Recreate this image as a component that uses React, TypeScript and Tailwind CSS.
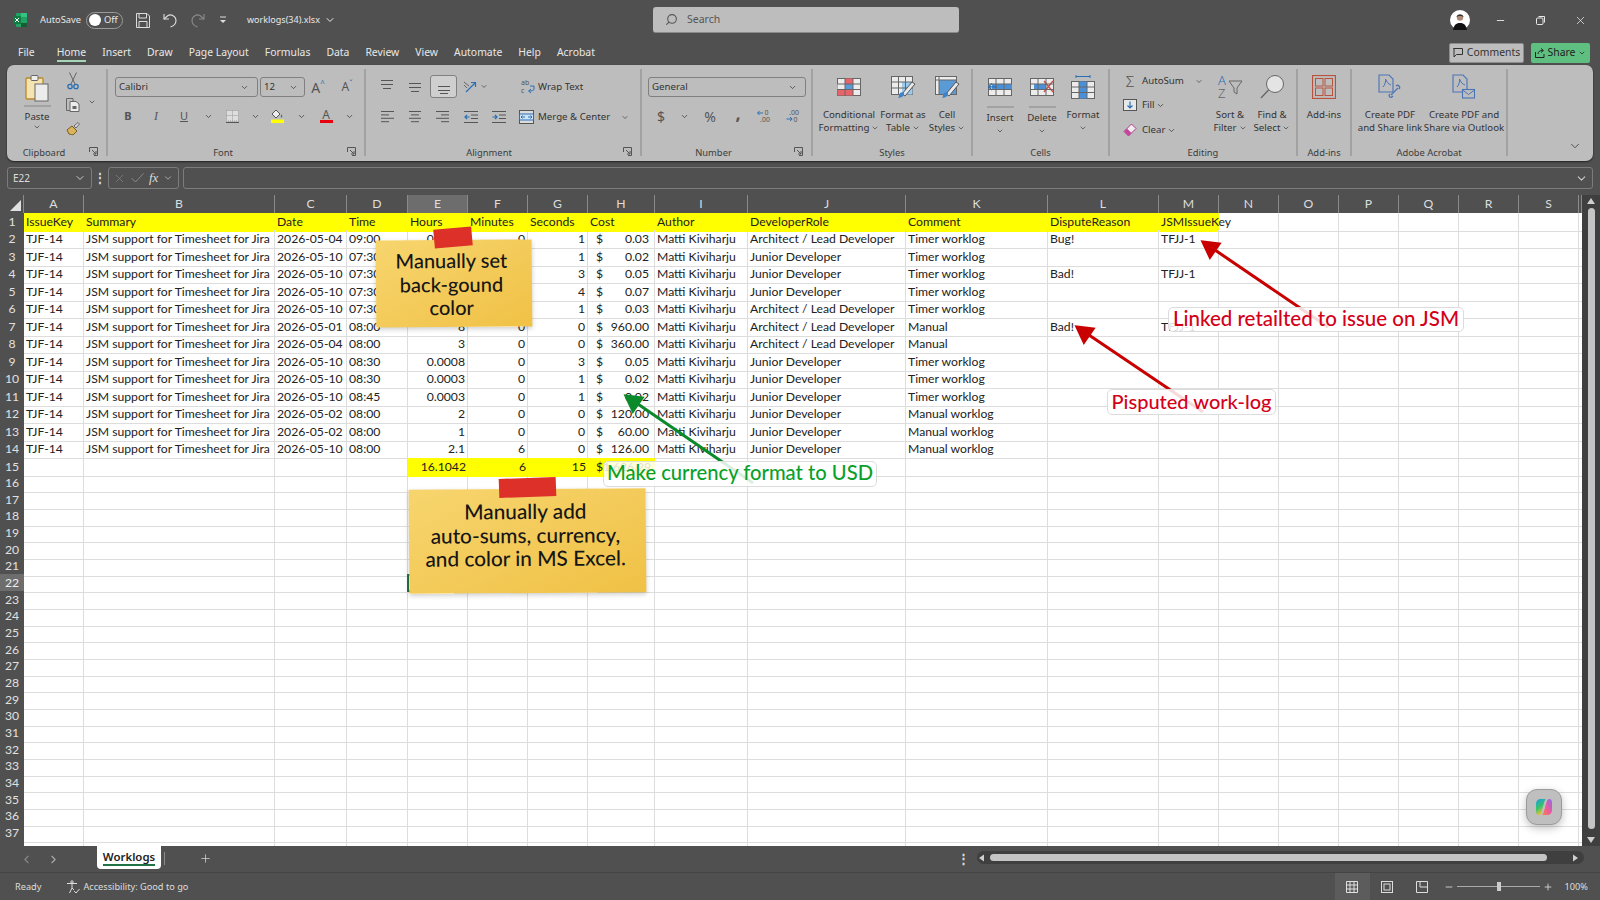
import type { ReactNode } from "react";
import { ChevronDown, Search, Minus, X, Plus, ChevronLeft, ChevronRight } from "lucide-react";

const gridCols =
  "grid grid-cols-[24px_60px_191px_72px_61px_60px_60px_60px_67px_93px_158px_142px_111px_60px_60px_60px_60px_60px_60px_60px_3px]";

const columns = ["A", "B", "C", "D", "E", "F", "G", "H", "I", "J", "K", "L", "M", "N", "O", "P", "Q", "R", "S", ""];

const KEY = "TJF-14";
const SUM = "JSM support for Timesheet for Jira";
const ME = "Matti Kiviharju";
const LEAD = "Architect / Lead Developer";
const JUNIOR = "Junior Developer";
const TIMER = "Timer worklog";
const MANUAL = "Manual worklog";

const rows: string[][] = [
  ["IssueKey", "Summary", "Date", "Time", "Hours", "Minutes", "Seconds", "Cost", "Author", "DeveloperRole", "Comment", "DisputeReason", "JSMIssueKey"],
  [KEY, SUM, "2026-05-04", "09:00", "0.0003", "0", "1", "0.03", ME, LEAD, TIMER, "Bug!", "TFJJ-1"],
  [KEY, SUM, "2026-05-10", "07:30", "0.0003", "0", "1", "0.02", ME, JUNIOR, TIMER, "", ""],
  [KEY, SUM, "2026-05-10", "07:30", "0.0008", "0", "3", "0.05", ME, JUNIOR, TIMER, "Bad!", "TFJJ-1"],
  [KEY, SUM, "2026-05-10", "07:30", "0.0011", "0", "4", "0.07", ME, JUNIOR, TIMER, "", ""],
  [KEY, SUM, "2026-05-10", "07:30", "0.0003", "0", "1", "0.03", ME, LEAD, TIMER, "", ""],
  [KEY, SUM, "2026-05-01", "08:00", "8", "0", "0", "960.00", ME, LEAD, "Manual", "Bad!", "TFJJ-1"],
  [KEY, SUM, "2026-05-04", "08:00", "3", "0", "0", "360.00", ME, LEAD, "Manual", "", ""],
  [KEY, SUM, "2026-05-10", "08:30", "0.0008", "0", "3", "0.05", ME, JUNIOR, TIMER, "", ""],
  [KEY, SUM, "2026-05-10", "08:30", "0.0003", "0", "1", "0.02", ME, JUNIOR, TIMER, "", ""],
  [KEY, SUM, "2026-05-10", "08:45", "0.0003", "0", "1", "0.02", ME, JUNIOR, TIMER, "", ""],
  [KEY, SUM, "2026-05-02", "08:00", "2", "0", "0", "120.00", ME, JUNIOR, MANUAL, "", ""],
  [KEY, SUM, "2026-05-02", "08:00", "1", "0", "0", "60.00", ME, JUNIOR, MANUAL, "", ""],
  [KEY, SUM, "2026-05-10", "08:00", "2.1", "6", "0", "126.00", ME, JUNIOR, MANUAL, "", ""],
  ["", "", "", "", "16.1042", "6", "15", "1,626.29"],
];

const Chev = ({ size = 9, color = "#444" }: { size?: number; color?: string }) => (
  <ChevronDown size={size} strokeWidth={2.2} color={color} />
);

const Launcher = () => (
  <svg width="9" height="9" viewBox="0 0 9 9" fill="none" stroke="#555" strokeWidth="1">
    <path d="M0.5 5V0.5H8.5V8.5H5" />
    <path d="M3 3L7 7M7 4V7H4" />
  </svg>
);

const Group = ({ className, labelClass = "", label, launcher, children }: { className: string; labelClass?: string; label: string; launcher?: boolean; children: ReactNode }) => (
  <div className={`flex flex-col shrink-0 h-[87px] mt-[4px] border-r-2 border-[#a2a2a2] ${className}`}>
    <div className="h-[79px]">{children}</div>
    <div className={`relative h-[10px] leading-[14px] text-center text-[9.4px] text-[#3c3c3c] whitespace-nowrap ${labelClass}`}>
      {label}
      {launcher && (
        <span className="absolute right-[8px] top-[1px]">
          <Launcher />
        </span>
      )}
    </div>
  </div>
);

const Cell = ({ className, children }: { className: string; children: ReactNode }) => (
  <div className={`flex items-center justify-center shrink-0 h-full ${className}`}>{children}</div>
);

const Big = ({ className, icon, lines, chev }: { className: string; icon: ReactNode; lines: string[]; chev?: boolean }) => (
  <div className={`flex flex-col items-center shrink-0 pt-[5px] ${className}`}>
    <div className="flex items-center justify-center h-[26px]">{icon}</div>
    <div className="mt-[8px] text-center text-[9.7px] leading-[13px] text-[#333] whitespace-nowrap">
      {lines.map((l, i) => (
        <div key={i} className="flex items-center justify-center gap-[2px]">
          {l}
          {chev && lines.length > 1 && i === lines.length - 1 && <Chev size={8} />}
        </div>
      ))}
      {chev && lines.length === 1 && <div className="flex justify-center h-[13px] items-center"><Chev size={8} /></div>}
    </div>
  </div>
);

const Split = ({ className, icon, label }: { className: string; icon: ReactNode; label: string }) => (
  <div className={`flex flex-col items-center shrink-0 pt-[5px] ${className}`}>
    <div className="flex items-center justify-center h-[26px]">{icon}</div>
    <div className="mt-[6px] w-[27px] h-[2px] bg-[#a2a2a2]" />
    <div className="mt-[3px] text-[9.7px] leading-[13px] text-[#333]">{label}</div>
    <div className="flex items-center h-[13px]"><Chev size={8} /></div>
  </div>
);

const AlignIcon = ({ lines }: { lines: [number, number][] }) => (
  <svg width="14" height="14" viewBox="0 0 14 14" stroke="#555" strokeWidth="1">
    {lines.map(([x1, y], i) => (
      <path key={i} d={`M${x1} ${y + 0.5}H${14 - (x1 === 0 ? 0 : x1)}`} />
    ))}
  </svg>
);

const LinesIcon = ({ rows }: { rows: [number, number][] }) => (
  <svg width="14" height="14" viewBox="0 0 14 14" stroke="#555" strokeWidth="1">
    {rows.map(([a, b], i) => (
      <path key={i} d={`M${a} ${1.5 + i * 3.4}H${b}`} />
    ))}
  </svg>
);

const IndentIcon = ({ dir }: { dir: "in" | "out" }) => (
  <svg width="14" height="14" viewBox="0 0 14 14">
    <path d="M0 1.5H14M7 5H14M7 8.5H14M0 12.5H14" stroke="#555" strokeWidth="1" />
    {dir === "out" ? (
      <path d="M5.5 7H1M3 5L1 7L3 9" stroke="#2a6fb5" strokeWidth="1.2" fill="none" />
    ) : (
      <path d="M0.5 7H5M3 5L5 7L3 9" stroke="#2a6fb5" strokeWidth="1.2" fill="none" />
    )}
  </svg>
);

const SheetGrid = ({ children }: { children?: ReactNode }) => (
  <svg width="24" height="20" viewBox="0 0 24 20">
    <rect x="0.5" y="1.5" width="23" height="17" fill="#ececec" stroke="#666" />
    {children}
    <path d="M0.5 7H23.5M0.5 12.5H23.5M8 1.5V18.5M16 1.5V18.5" stroke="#666" strokeWidth="1" />
  </svg>
);

const BrushOver = () => (
  <>
    <path d="M12 20L22 8L25 10L15 22Z" fill="#e8e8e8" stroke="#555" strokeWidth="1" />
    <path d="M9 21C10 18 12 18 14 18.5C15 21 12 24 8 24C9 23 9 22 9 21Z" fill="#3e82c9" />
  </>
);

const App = () => (
  <div className="relative flex flex-col w-[1600px] h-[900px] overflow-hidden bg-[#505050] font-['Noto_Sans',sans-serif]">
    {/* title bar */}
    <div className="flex items-center h-[40px] shrink-0 text-[9.3px] text-[#e8e8e8]">
      <div className="flex items-center w-[653px] shrink-0 pl-[13px]">
        <svg width="14" height="14" viewBox="0 0 14 14" className="shrink-0">
          <rect x="3" y="0" width="11" height="14" rx="1" fill="#21a366" />
          <rect x="8" y="0" width="6" height="4" fill="#33c481" />
          <rect x="8" y="10" width="6" height="4" fill="#185c37" />
          <rect x="0" y="3" width="8" height="8" rx="1" fill="#107c41" />
          <path d="M2 5L6 9M6 5L2 9" stroke="#fff" strokeWidth="1" />
        </svg>
        <span className="ml-[13px] w-[40px]">AutoSave</span>
        <div className="flex items-center ml-[6px] w-[37px] h-[17px] rounded-full border border-[#9a9a9a] pl-[2px]">
          <div className="w-[12px] h-[12px] rounded-full bg-white" />
          <span className="ml-[3px] text-[9.3px]">Off</span>
        </div>
        <svg width="14" height="15" viewBox="0 0 14 15" fill="none" stroke="#ddd" strokeWidth="1" className="ml-[13px]">
          <path d="M0.5 0.5H11L13.5 3V14.5H0.5Z" />
          <path d="M3 0.5V5H10.5V0.5M3 14.5V8.5H11V14.5" />
        </svg>
        <svg width="14" height="15" viewBox="0 0 14 15" fill="none" stroke="#ddd" strokeWidth="1.1" className="ml-[13px]">
          <path d="M1 1V6H6" />
          <path d="M1 6L5 2.5C8 0.8 13 3 13 7.5C13 10.5 10.5 13 7.5 14" />
        </svg>
        <svg width="14" height="15" viewBox="0 0 14 15" fill="none" stroke="#8a8a8a" strokeWidth="1.1" className="ml-[14px]">
          <path d="M13 1V6H8" />
          <path d="M13 6L9 2.5C6 0.8 1 3 1 7.5C1 10.5 3.5 13 6.5 14" />
        </svg>
        <svg width="8" height="8" viewBox="0 0 8 8" className="ml-[14px]">
          <path d="M1 1H7" stroke="#ddd" />
          <path d="M1 4H7L4 7Z" fill="#ddd" />
        </svg>
        <span className="ml-[20px] text-[9px]">worklogs(34).xlsx</span>
        <ChevronDown size={12} className="ml-[4px]" />
      </div>
      <div className="flex items-center w-[306px] h-[26px] shrink-0 pl-[12px] rounded-[3px] bg-[#bdbdbd] text-[#555] border-b border-[#8a8a8a]">
        <Search size={13} className="-scale-x-100" color="#555" />
        <span className="ml-[9px] text-[10.5px] pt-[1px]">Search</span>
      </div>
      <div className="flex items-center justify-end flex-1">
        <svg width="20" height="20" viewBox="0 0 20 20" className="mr-[10px]">
          <circle cx="10" cy="10" r="10" fill="#fff" />
          <path d="M3 20C4 14 7 13 10 13C13 13 16 14 17 20Z" fill="#111" />
          <circle cx="10" cy="7.5" r="3.2" fill="#b08a78" />
          <path d="M6.5 7C6.5 3.5 13.5 3.5 13.5 7C12 5.5 8 5.5 6.5 7Z" fill="#333" />
        </svg>
        <div className="flex items-center justify-center w-[40px]"><Minus size={11} /></div>
        <div className="flex items-center justify-center w-[40px]">
          <svg width="9" height="9" viewBox="0 0 9 9" fill="none" stroke="#e8e8e8"><rect x="0.5" y="2" width="6.5" height="6.5" rx="1" /><path d="M2.5 0.5H8.5V6.5" /></svg>
        </div>
        <div className="flex items-center justify-center w-[40px]"><X size={13} strokeWidth={1.4} /></div>
      </div>
    </div>

    {/* tabs */}
    <div className="flex items-center h-[25px] shrink-0 text-[10.4px] text-[#e8e8e8]">
      <div className="flex items-center pt-[1px] pl-[18px] gap-[16px]">
        <span className="mr-[6px]">File</span>
        <span className="relative">
          Home
          <span className="absolute left-0 right-0 top-[15px] h-[2px] bg-[#a5d6b8]" />
        </span>
        <span>Insert</span>
        <span>Draw</span>
        <span>Page Layout</span>
        <span>Formulas</span>
        <span>Data</span>
        <span>Review</span>
        <span>View</span>
        <span>Automate</span>
        <span>Help</span>
        <span>Acrobat</span>
      </div>
      <div className="flex items-center justify-end flex-1 pr-[10px]">
        <div className="flex items-center justify-center gap-[4px] w-[75px] h-[20px] rounded-[2px] bg-[#bdbdbd] border border-[#8c8c8c] text-[#333]">
          <svg width="10" height="10" viewBox="0 0 10 10" fill="none" stroke="#333"><path d="M0.5 0.5H9.5V6.5H3.5L1 9V0.5Z" /></svg>
          Comments
        </div>
        <div className="flex items-center justify-center gap-[3px] ml-[7px] w-[59px] h-[20px] rounded-[2px] bg-[#5fbf80] text-[#222]">
          <svg width="10" height="10" viewBox="0 0 10 10" fill="none" stroke="#222"><path d="M0.5 4V9.5H9V6M3 6C3 3.5 5 2.5 7.5 2.5M6 0.5L8.5 2.5L6 4.5" /></svg>
          Share
          <Chev size={8} color="#222" />
        </div>
      </div>
    </div>

    {/* ribbon */}
    <div className="flex shrink-0 ml-[7px] w-[1586px] h-[96px] rounded-[7px] bg-[#bdbdbd] shadow-[0_1px_2px_rgba(0,0,0,0.6)] text-[#333]">
      <Group className="w-[101px]" labelClass="pr-[25px]" label="Clipboard" launcher>
        <div className="relative flex">
          <div className="flex flex-col items-center w-[58px] pt-[6px] pl-[2px]">
            <svg width="24" height="27" viewBox="0 0 24 27">
              <rect x="1" y="3" width="17" height="21" rx="1" fill="#f5e3b0" stroke="#b98a2e" strokeWidth="1.3" />
              <rect x="6" y="0.5" width="7" height="5" rx="1" fill="#eee" stroke="#666" />
              <rect x="10" y="9" width="13" height="17" fill="#ececec" stroke="#666" />
            </svg>
            <div className="mt-[3px] w-[27px] h-[2px] bg-[#a2a2a2]" />
            <span className="mt-[3px] text-[9.7px] leading-[13px]">Paste</span>
            <Chev size={8} />
          </div>
          <div className="flex flex-col items-center w-[16px] pt-[3px]">
            <svg width="12" height="18" viewBox="0 0 12 18" fill="none">
              <path d="M2.5 0.5L8 12M9.5 0.5L4 12" stroke="#666" />
              <circle cx="3" cy="14.5" r="2.2" stroke="#2a6fb5" strokeWidth="1.3" />
              <circle cx="9" cy="14.5" r="2.2" stroke="#2a6fb5" strokeWidth="1.3" />
            </svg>
            <svg width="14" height="14" viewBox="0 0 14 14" fill="none" stroke="#666" className="mt-[8px]">
              <path d="M4 12.5H0.5V0.5H7V3" />
              <path d="M4 3.5H10L13 6V13.5H4Z" fill="#ececec" />
              <rect x="6.5" y="8" width="4" height="3" fill="#666" stroke="none" />
            </svg>
            <svg width="14" height="14" viewBox="0 0 14 14" className="mt-[10px]">
              <path d="M1 8L6 4L11 9L7 13C6 12 5 13 3 12Z" fill="#d9b45a" stroke="#7a5c1e" />
              <path d="M8 4L12 0.5L13.5 2L10 6Z" fill="#ddd" stroke="#666" />
            </svg>
          </div>
          <div className="pt-[29px] pl-[7px]"><Chev size={8} /></div>
        </div>
      </Group>

      <Group className="w-[258px]" labelClass="pr-[26px]" label="Font" launcher>
        <div className="flex items-center h-[28px] pt-[8px] pl-[7px]">
          <div className="flex items-center justify-between w-[143px] h-[20px] pl-[3px] pr-[8px] rounded-[3px] border border-[#808080] text-[9.7px]">
            Calibri <Chev />
          </div>
          <div className="flex items-center justify-between ml-[2px] w-[45px] h-[20px] pl-[3px] pr-[6px] rounded-[3px] border border-[#808080] text-[9.7px]">
            12 <Chev />
          </div>
          <Cell className="w-[22px] ml-[2px] text-[14px] text-[#555]">A<span className="text-[8px] text-[#2a6fb5] -mt-[8px]">^</span></Cell>
          <Cell className="w-[22px] ml-[7px] text-[12px] text-[#555]">A<span className="text-[8px] text-[#2a6fb5] -mt-[6px]">ˇ</span></Cell>
        </div>
        <div className="flex items-center h-[20px] mt-[9px] pl-[6px] text-[#555]">
          <Cell className="w-[28px] font-bold text-[11px]">B</Cell>
          <Cell className="w-[28px] italic text-[12px] font-['Liberation_Serif',serif]">I</Cell>
          <Cell className="w-[28px] underline text-[11px]">U</Cell>
          <Cell className="w-[20px]"><Chev /></Cell>
          <Cell className="w-[28px]">
            <svg width="13" height="13" viewBox="0 0 13 13">
              <rect x="0.5" y="0.5" width="12" height="10.5" fill="#ddd" stroke="#999" strokeDasharray="1 1" />
              <path d="M6.5 0.5V11M0.5 5.5H12.5" stroke="#999" strokeDasharray="1 1" />
              <path d="M0 12.5H13" stroke="#555" />
            </svg>
          </Cell>
          <Cell className="w-[18px]"><Chev /></Cell>
          <Cell className="w-[28px]">
            <svg width="14" height="14" viewBox="0 0 14 14">
              <path d="M5 1L9 5L5 9L1 5Z" fill="#eee" stroke="#555" />
              <path d="M10.5 5C11.5 7 11.5 8.5 10.5 8.5C9.5 8.5 9.5 7 10.5 5Z" fill="#2a6fb5" />
              <rect x="0" y="10.5" width="13" height="3.5" fill="#ffff00" />
            </svg>
          </Cell>
          <Cell className="w-[18px]"><Chev /></Cell>
          <Cell className="w-[32px]">
            <div className="flex flex-col items-center">
              <span className="text-[12px] leading-[11px] text-[#555]">A</span>
              <span className="w-[13px] h-[3.5px] bg-[#e8000d]" />
            </div>
          </Cell>
          <Cell className="w-[14px]"><Chev /></Cell>
        </div>
      </Group>

      <Group className="w-[276px]" labelClass="pr-[28px]" label="Alignment" launcher>
        <div className="flex items-center h-[23px] mt-[6px] pl-[7px] text-[9.7px]">
          <Cell className="w-[28px]"><AlignIcon lines={[[1, 0], [1, 4], [3, 8]]} /></Cell>
          <Cell className="w-[28px]"><AlignIcon lines={[[1, 3], [1, 7], [3, 11]]} /></Cell>
          <Cell className="w-[27px] ml-[1px] rounded-[3px] border border-[#808080] bg-[#cfcfcf]"><AlignIcon lines={[[1, 6], [1, 10], [3, 13]]} /></Cell>
          <Cell className="w-[20px] ml-[3px]">
            <svg width="14" height="14" viewBox="0 0 14 14" fill="none">
              <path d="M1 2L6 6M1 5L4 8" stroke="#666" />
              <path d="M3 12L12 3M8 2.5H12.5V7" stroke="#2a6fb5" strokeWidth="1.2" />
            </svg>
          </Cell>
          <Cell className="w-[8px]"><Chev /></Cell>
          <Cell className="w-[16px] ml-[32px]">
            <svg width="15" height="15" viewBox="0 0 15 15" fill="none">
              <text x="0" y="6" fontSize="7" fill="#555">ab</text>
              <text x="0" y="14" fontSize="7" fill="#555">c</text>
              <path d="M9 7H13V10C13 11.5 11 12 8 12M10 10L7.5 12L10 14" stroke="#2a6fb5" />
            </svg>
          </Cell>
          <span className="ml-[2px] pt-[1px]">Wrap Text</span>
        </div>
        <div className="flex items-center h-[20px] mt-[9px] pl-[7px] text-[9.7px]">
          <Cell className="w-[28px]"><LinesIcon rows={[[1, 14], [1, 9], [1, 14], [1, 9]]} /></Cell>
          <Cell className="w-[28px]"><LinesIcon rows={[[1, 13], [3, 11], [1, 13], [3, 11]]} /></Cell>
          <Cell className="w-[28px]"><LinesIcon rows={[[0, 13], [5, 13], [0, 13], [5, 13]]} /></Cell>
          <Cell className="w-[28px]"><IndentIcon dir="out" /></Cell>
          <Cell className="w-[28px]"><IndentIcon dir="in" /></Cell>
          <Cell className="w-[16px] ml-[5px]">
            <svg width="15" height="14" viewBox="0 0 15 14" fill="none" stroke="#2a6fb5">
              <rect x="0.5" y="0.5" width="14" height="13" fill="#dcdcdc" stroke="#555" />
              <rect x="0.5" y="4" width="14" height="6" fill="#cfe3f5" />
              <path d="M6 7H2M3.5 5.5L2 7L3.5 8.5M9 7H13M11.5 5.5L13 7L11.5 8.5" />
            </svg>
          </Cell>
          <span className="ml-[4px] w-[71px] whitespace-nowrap">Merge &amp; Center</span>
          <Cell className="w-[8px] ml-[12px]"><Chev /></Cell>
        </div>
      </Group>

      <Group className="w-[171px]" labelClass="pr-[26px]" label="Number" launcher>
        <div className="flex items-center h-[28px] pt-[8px] pl-[6px]">
          <div className="flex items-center justify-between w-[158px] h-[20px] pl-[3px] pr-[8px] rounded-[3px] border border-[#808080] text-[9.7px]">
            General <Chev />
          </div>
        </div>
        <div className="flex items-center h-[20px] mt-[9px] pl-[6px] text-[#555]">
          <Cell className="w-[26px] text-[14px]">$</Cell>
          <Cell className="w-[20px]"><Chev /></Cell>
          <Cell className="w-[32px] text-[14px]">%</Cell>
          <Cell className="w-[24px] text-[18px] font-bold leading-[14px] pb-[6px]">,</Cell>
          <Cell className="w-[28px]">
            <svg width="14" height="14" viewBox="0 0 14 14" fill="none">
              <path d="M6 4H0.8M2.5 2L0.5 4L2.5 6" stroke="#2a6fb5" />
              <text x="7.5" y="6" fontSize="7" fill="#555">0</text>
              <text x="3" y="13" fontSize="7" fill="#555">.00</text>
            </svg>
          </Cell>
          <Cell className="w-[30px]">
            <svg width="14" height="14" viewBox="0 0 14 14" fill="none">
              <text x="3" y="6" fontSize="7" fill="#555">.00</text>
              <path d="M0.5 10H6M4 8L6.2 10L4 12" stroke="#2a6fb5" />
              <text x="7.5" y="13" fontSize="7" fill="#555">0</text>
            </svg>
          </Cell>
        </div>
      </Group>

      <Group className="w-[160px]" label="Styles">
        <div className="flex">
          <Big
            className="w-[58px] ml-[7px]"
            icon={
              <SheetGrid>
                <rect x="8" y="1.5" width="8" height="5.5" fill="#e8636a" />
                <rect x="0.5" y="7" width="7.5" height="5.5" fill="#ececec" />
                <rect x="8" y="7" width="8" height="5.5" fill="#5b9bd5" />
                <rect x="8" y="12.5" width="8" height="6" fill="#e8636a" />
                <rect x="0.5" y="12.5" width="7.5" height="6" fill="#e8636a" />
              </SheetGrid>
            }
            lines={["Conditional", "Formatting"]}
            chev
          />
          <Big
            className="w-[44px] ml-[3px]"
            icon={
              <svg width="26" height="26" viewBox="0 0 26 26">
                <rect x="1.5" y="2.5" width="21" height="18" fill="#ececec" stroke="#666" />
                <rect x="12" y="8" width="10.5" height="12.5" fill="#9ccbf0" />
                <path d="M1.5 8H22.5M1.5 14H22.5M8.5 2.5V20.5M15.5 2.5V20.5" stroke="#666" />
                <BrushOver />
              </svg>
            }
            lines={["Format as", "Table"]}
            chev
          />
          <Big
            className="w-[40px] ml-[2px]"
            icon={
              <svg width="26" height="26" viewBox="0 0 26 26">
                <rect x="1.5" y="2.5" width="21" height="18" fill="#ececec" stroke="#666" />
                <rect x="5" y="6" width="17" height="14" fill="#5b9bd5" />
                <path d="M1.5 6H22.5M5 2.5V20.5" stroke="#666" />
                <BrushOver />
              </svg>
            }
            lines={["Cell", "Styles"]}
            chev
          />
        </div>
      </Group>

      <Group className="w-[137px]" label="Cells">
        <div className="flex pl-[6px]">
          <Split
            className="w-[42px]"
            label="Insert"
            icon={
              <SheetGrid>
                <rect x="4" y="7" width="20" height="5.5" fill="#4a90d9" />
                <path d="M9 9.8H0.5M4 6.5L0.5 9.8L4 13" fill="none" stroke="#2a6fb5" strokeWidth="1.3" />
              </SheetGrid>
            }
          />
          <Split
            className="w-[42px]"
            label="Delete"
            icon={
              <SheetGrid>
                <rect x="4" y="7" width="12" height="5.5" fill="#4a90d9" />
                <path d="M14 4L23 15M23 4L14 15" stroke="#c8504a" strokeWidth="1.4" />
              </SheetGrid>
            }
          />
          <Big
            className="w-[40px]"
            icon={
              <svg width="24" height="26" viewBox="0 0 24 26">
                <path d="M5 2.5H19M5 1V4M19 1V4" stroke="#2a6fb5" />
                <rect x="0.5" y="7.5" width="23" height="17" fill="#ececec" stroke="#666" />
                <rect x="8" y="7.5" width="8" height="17" fill="#4a90d9" />
                <path d="M0.5 13H23.5M0.5 18.5H23.5M8 7.5V24.5M16 7.5V24.5" stroke="#666" />
              </svg>
            }
            lines={["Format"]}
            chev
          />
        </div>
      </Group>

      <Group className="w-[188px]" label="Editing">
        <div className="flex">
          <div className="flex flex-col w-[100px] pl-[12px] text-[9.7px] shrink-0">
            <div className="flex items-center h-[24px]">
              <Cell className="w-[16px]"><span className="text-[15px] text-[#555] font-light">Σ</span></Cell>
              <span className="ml-[4px] w-[41px]">AutoSum</span>
              <Cell className="w-[8px] ml-[12px]"><Chev /></Cell>
            </div>
            <div className="flex items-center h-[24px]">
              <Cell className="w-[16px]">
                <svg width="14" height="12" viewBox="0 0 14 12" fill="none">
                  <rect x="0.5" y="0.5" width="13" height="11" fill="#e8e8e8" stroke="#555" />
                  <path d="M7 2.5V9M4.5 6.5L7 9L9.5 6.5" stroke="#2a6fb5" strokeWidth="1.2" />
                </svg>
              </Cell>
              <span className="ml-[4px]">Fill</span>
              <Cell className="w-[10px] ml-[1px]"><Chev /></Cell>
            </div>
            <div className="flex items-center h-[26px]">
              <Cell className="w-[16px]">
                <svg width="14" height="14" viewBox="0 0 14 14">
                  <path d="M8.5 1L13 5.5L5.5 13L1 8.5Z" fill="#eee" stroke="#b23a8a" />
                  <path d="M4 5.5L8.5 10L5.5 13L1 8.5Z" fill="#c2479b" />
                </svg>
              </Cell>
              <span className="ml-[4px]">Clear</span>
              <Cell className="w-[10px] ml-[1px]"><Chev /></Cell>
            </div>
          </div>
          <Big
            className="w-[40px]"
            icon={
              <div className="flex w-[26px] h-[26px] pl-[1px]">
                <div className="flex flex-col w-[10px] text-[13px] leading-[13px] font-light">
                  <span className="text-[#2a6fb5]">A</span>
                  <span className="text-[#666]">Z</span>
                </div>
                <svg width="15" height="16" viewBox="0 0 15 16" fill="none" className="mt-[6px]">
                  <path d="M1 1H14L9 8V14L6 12V8Z" stroke="#666" />
                </svg>
              </div>
            }
            lines={["Sort &", "Filter"]}
            chev
          />
          <Big
            className="w-[40px] ml-[2px]"
            icon={
              <svg width="26" height="26" viewBox="0 0 26 26" fill="none">
                <circle cx="16" cy="10" r="8.5" fill="#e4e4e4" stroke="#666" />
                <path d="M9.5 16L2 24" stroke="#666" strokeWidth="1.2" />
              </svg>
            }
            lines={["Find &", "Select"]}
            chev
          />
        </div>
      </Group>

      <Group className="w-[54px]" label="Add-ins">
        <Big
          className="w-full"
          icon={
            <svg width="24" height="24" viewBox="0 0 24 24" fill="none" stroke="#b8543e" strokeWidth="1">
              <rect x="0.5" y="0.5" width="23" height="23" strokeWidth="1.2" />
              <rect x="3.5" y="3.5" width="7.5" height="7.5" />
              <rect x="13" y="3.5" width="7.5" height="7.5" />
              <rect x="3.5" y="13" width="7.5" height="7.5" />
              <rect x="13" y="13" width="7.5" height="7.5" />
            </svg>
          }
          lines={["Add-ins"]}
        />
      </Group>

      <Group className="w-[156px]" label="Adobe Acrobat">
        <div className="flex pl-[2px]">
          <Big
            className="w-[72px]"
            icon={
              <svg width="24" height="26" viewBox="0 0 24 26" fill="none" stroke="#4a74b8">
                <path d="M1 1H11L15 5V18H1Z" strokeWidth="1.1" />
                <path d="M5 13C7 11 8 7 7.5 5C9 8 10 10 13 11" />
                <path d="M13 21L20 14M12 20C10 22 12 25 15 22M21 15C23 13 20 10 18 12" strokeWidth="1.2" />
              </svg>
            }
            lines={["Create PDF", "and Share link"]}
          />
          <Big
            className="w-[76px]"
            icon={
              <svg width="24" height="26" viewBox="0 0 24 26" fill="none" stroke="#4a74b8">
                <path d="M1 1H11L15 5V18H1Z" strokeWidth="1.1" />
                <path d="M5 13C7 11 8 7 7.5 5C9 8 10 10 13 11" />
                <rect x="10.5" y="15.5" width="12" height="8.5" fill="#bdbdbd" strokeWidth="1.1" />
                <path d="M10.5 16L16.5 20.5L22.5 16" />
              </svg>
            }
            lines={["Create PDF and", "Share via Outlook"]}
          />
        </div>
      </Group>

      <div className="flex flex-1 items-end justify-end pr-[11px] pb-[8px]">
        <ChevronDown size={14} color="#444" strokeWidth={1.5} />
      </div>
    </div>

    {/* formula bar */}
    <div className="flex items-center shrink-0 h-[22px] mt-[6px] pl-[7px] text-[#ddd] text-[10px]">
      <div className="flex items-center justify-between w-[85px] h-full px-[5px] rounded-[3px] border border-[#7c7c7c]">
        E22 <ChevronDown size={12} color="#ccc" />
      </div>
      <span className="flex justify-center w-[16px] font-bold text-[12px]">⋮</span>
      <div className="flex items-center w-[71px] h-full rounded-[3px] border border-[#7c7c7c] pl-[4px] gap-[5px]">
        <X size={13} color="#8a8a8a" strokeWidth={1.2} />
        <svg width="13" height="10" viewBox="0 0 13 10" fill="none" stroke="#8a8a8a"><path d="M0.5 5L4.5 9L12.5 0.5" /></svg>
        <span className="italic text-[13px] font-['Liberation_Serif',serif] text-[#ddd]">fx</span>
        <ChevronDown size={10} color="#bbb" />
      </div>
      <div className="flex items-center justify-end ml-[4px] w-[1410px] h-full pr-[4px] rounded-[3px] border border-[#7c7c7c]">
        <ChevronDown size={13} color="#ccc" />
      </div>
    </div>

    {/* sheet */}
    <div className="flex shrink-0 h-[651px] mt-[6px]">
      <div className="w-[1582px] h-full overflow-hidden bg-white">
        <div className={`${gridCols} h-[17.5px] bg-[#505050] text-[#dedede] text-[12.2px] font-['Lato',sans-serif]`}>
          <div className="flex items-end justify-end pr-[2px] pb-[2px] border-r border-[#8a8a8a]">
            <div className="w-0 h-0 border-l-[11px] border-b-[11px] border-l-transparent border-b-[#e0e0e0]" />
          </div>
          {columns.map((c, i) => (
            <div
              key={i}
              className={
                c === "E"
                  ? "flex items-center justify-center border-r border-[#8a8a8a] bg-[#6d6d6d]"
                  : "flex items-center justify-center border-r border-[#8a8a8a]"
              }
            >
              {c}
            </div>
          ))}
        </div>
        {Array.from({ length: 38 }, (_, r) => {
          const row = rows[r] ?? [];
          return (
            <div
              key={r}
              className={`${gridCols} ${r < 14 ? "h-[17.5px]" : "h-[16.66px]"} text-[12.2px] text-[#222] font-['Lato',sans-serif]`}
            >
              <div
                className={
                  r === 21
                    ? "flex items-center justify-center bg-[#6d6d6d] text-[#eee] border-b border-[#7a7a7a]"
                    : "flex items-center justify-center bg-[#505050] text-[#e0e0e0] border-b border-[#6c6c6c]"
                }
              >
                {r + 1}
              </div>
              {columns.map((_, c) => {
                const yellow = (r === 0 && c < 13) || (r === 14 && c >= 4 && c <= 7);
                const money = r > 0 && c === 7;
                const numeric = r > 0 && c >= 4 && c <= 6;
                const value = row[c] ?? "";
                return (
                  <div
                    key={c}
                    className={`flex items-center whitespace-nowrap px-[2px] ${
                      yellow ? "bg-[#ffff00] border-b border-[#ffff00]" : "border-r border-b border-[#dddddd]"
                    } ${numeric ? "justify-end" : ""} ${money ? "justify-between" : ""}`}
                  >
                    {money && value && <span className="ml-[6px]">$</span>}
                    {value && <span className={money ? "mr-[3px]" : ""}>{value}</span>}
                  </div>
                );
              })}
            </div>
          );
        })}
      </div>
      <div className="flex flex-col items-center flex-1 bg-[#3f3f3f]">
        <svg width="10" height="10" viewBox="0 0 10 10" className="mt-[1px]"><path d="M1 8L5 2L9 8Z" fill="#cfcfcf" /></svg>
        <div className="flex-1 w-[7px] mt-[2px] mb-[6px] rounded-full bg-[#c4c4c4]" />
        <svg width="10" height="10" viewBox="0 0 10 10" className="mb-[1px]"><path d="M1 2L5 8L9 2Z" fill="#cfcfcf" /></svg>
      </div>
    </div>

    {/* sheet tabs */}
    <div className="flex items-start shrink-0 h-[26px] text-[#ddd]">
      <Cell className="w-[26px] ml-[13px] h-[24px]"><ChevronLeft size={13} color="#888" /></Cell>
      <Cell className="w-[26px] ml-[1px] h-[24px]"><ChevronRight size={13} color="#aaa" /></Cell>
      <div className="flex flex-col items-center justify-center ml-[31px] w-[64px] h-[23px] rounded-b-[4px] bg-white text-[#222] text-[11.4px] font-semibold">
        <span className="leading-[15px] border-b-2 border-[#217346]">Worklogs</span>
      </div>
      <div className="ml-[3px] mt-[6px] w-px h-[13px] bg-[#8a8a8a]" />
      <Plus size={13} strokeWidth={1.3} className="ml-[34px] mt-[6px]" />
      <span className="ml-[745px] mt-[3px] text-[13px] font-bold">⋮</span>
      <div className="flex items-center ml-[7px] mt-[5px] w-[607px] h-[13px] rounded-full bg-[#3f3f3f]">
        <svg width="8" height="8" viewBox="0 0 8 8" className="ml-[1px]"><path d="M6 0.5L1 4L6 7.5Z" fill="#cfcfcf" /></svg>
        <div className="ml-[4px] w-[557px] h-[7px] rounded-full bg-[#c4c4c4]" />
        <svg width="8" height="8" viewBox="0 0 8 8" className="ml-[24px]"><path d="M2 0.5L7 4L2 7.5Z" fill="#cfcfcf" /></svg>
      </div>
    </div>

    {/* status bar */}
    <div className="flex items-center flex-1 border-t border-[#444] pl-[15px] text-[9.2px] text-[#ddd]">
      <span>Ready</span>
      <svg width="14" height="14" viewBox="0 0 14 14" fill="none" stroke="#ddd" className="ml-[25px]">
        <circle cx="6" cy="2" r="1.2" />
        <path d="M1 3.5H11M6 4V8M6 8L3.5 13M6 8L8 10" />
        <path d="M8 11L10 13L13.5 9" />
      </svg>
      <span className="ml-[3px]">Accessibility: Good to go</span>
      <div className="flex items-center ml-auto h-full pr-[12px]">
        <div className="flex items-center justify-center w-[35px] h-full bg-[#5c5c5c]">
          <svg width="12" height="12" viewBox="0 0 12 12" fill="none" stroke="#e0e0e0"><path d="M0.5 0.5H11.5V11.5H0.5ZM4 0.5V11.5M8 0.5V11.5M0.5 4H11.5M0.5 8H11.5" /></svg>
        </div>
        <Cell className="w-[35px]">
          <svg width="12" height="12" viewBox="0 0 12 12" fill="none" stroke="#ddd"><rect x="0.5" y="0.5" width="11" height="11" /><rect x="3" y="3" width="6" height="6" /></svg>
        </Cell>
        <Cell className="w-[35px]">
          <svg width="12" height="12" viewBox="0 0 12 12" fill="none" stroke="#ddd"><path d="M0.5 0.5V11.5H11.5V0.5M4 0.5V6H11.5M0.5 0.5H11.5" /></svg>
        </Cell>
        <Minus size={10} className="ml-[4px]" />
        <div className="relative flex items-center ml-[3px] w-[83px] h-full">
          <div className="w-full h-px bg-[#aaa]" />
          <span className="absolute left-[40px] w-[4px] h-[9px] bg-[#ccc]" />
        </div>
        <Plus size={10} className="ml-[3px]" />
        <span className="ml-[12px]">100%</span>
      </div>
    </div>

    {/* annotations on top of the sheet */}
    <div className="absolute left-[407px] top-[574px] w-[62px] h-[18px] border-2 border-[#217346]" />

    <svg width="1600" height="900" className="absolute left-0 top-0 pointer-events-none">
      <g stroke="#c80000" strokeWidth="3" fill="#c80000">
        <path d="M1328 327L1212 248" />
        <path d="M1203 242L1219 244L1210 257Z" />
        <path d="M1203 412L1086 333" />
        <path d="M1077 327L1093 329L1084 342Z" />
      </g>
      <g stroke="#0b8a2b" strokeWidth="3" fill="#0b8a2b">
        <path d="M753 483L635 402" />
        <path d="M626 396L642 398L633 411Z" />
      </g>
    </svg>

    <div className="absolute left-[376px] top-[240px] flex flex-col items-center justify-center pt-[2px] pr-[5px] w-[156px] h-[87px] rotate-[-0.4deg] bg-linear-to-br from-[#f7d56e] to-[#f0c144] shadow-[0_2px_5px_rgba(0,0,0,0.2)] text-[20px] leading-[23.5px] font-medium text-[#161616] font-['Lato',sans-serif]">
      <span>Manually set</span>
      <span>back-gound</span>
      <span>color</span>
    </div>
    <div className="absolute left-[434px] top-[228px] w-[38px] h-[19px] rotate-[-5deg] bg-[#dc3028]" />

    <div className="absolute left-[409px] top-[489px] flex flex-col items-center justify-center pb-[13px] pr-[4px] w-[237px] h-[104px] rotate-[-0.4deg] bg-linear-to-br from-[#f7d56e] to-[#f0c144] shadow-[0_2px_5px_rgba(0,0,0,0.2)] text-[20.8px] leading-[23.5px] font-medium text-[#161616] font-['Lato',sans-serif]">
      <span>Manually add</span>
      <span>auto-sums, currency,</span>
      <span>and color in MS Excel.</span>
    </div>
    <div className="absolute left-[499px] top-[478px] w-[57px] h-[19px] rotate-[-2deg] bg-[#dc3028]" />

    <div className="absolute left-[603px] top-[461px] flex items-center justify-center pb-[3px] w-[274px] h-[26px] rounded-[5px] border border-[#dcdcdc] bg-white/85 text-[20.2px] font-medium text-[#0aa02a] whitespace-nowrap font-['Lato',sans-serif]">
      Make currency format to USD
    </div>
    <div className="absolute left-[1168px] top-[307px] flex items-center justify-center pb-[3px] w-[296px] h-[25px] rounded-[5px] border border-[#dcdcdc] bg-white/85 text-[20.5px] font-medium text-[#d4001a] whitespace-nowrap font-['Lato',sans-serif]">
      Linked retailted to issue on JSM
    </div>
    <div className="absolute left-[1107px] top-[389px] flex items-center justify-center pb-[3px] w-[169px] h-[26px] rounded-[5px] border border-[#dcdcdc] bg-white/85 text-[20px] font-medium text-[#d4001a] whitespace-nowrap font-['Lato',sans-serif]">
      Pisputed work-log
    </div>

    {/* copilot button */}
    <div className="absolute left-[1526px] top-[789px] flex items-center justify-center w-[36px] h-[36px] rounded-[11px] border border-[#9a9a9a] bg-[#bfbfbf] shadow-[0_3px_8px_rgba(0,0,0,0.25)]">
      <svg width="18" height="18" viewBox="0 0 18 18">
        <defs>
          <linearGradient id="cpa" x1="0" y1="0" x2="0.4" y2="1">
            <stop offset="0" stopColor="#1f9be8" />
            <stop offset="0.55" stopColor="#35c46b" />
            <stop offset="1" stopColor="#f2c230" />
          </linearGradient>
          <linearGradient id="cpb" x1="1" y1="0" x2="0" y2="1">
            <stop offset="0" stopColor="#8a6be8" />
            <stop offset="0.55" stopColor="#f05a9a" />
            <stop offset="1" stopColor="#f58a3c" />
          </linearGradient>
        </defs>
        <path d="M6 1H11C10 2 9.5 3 9 5L6.5 14C6 16 5 17 3.5 17C2 17 1 15.5 1 13V6C1 3 3 1 6 1Z" fill="url(#cpa)" />
        <path d="M12 17H7C8 16 8.5 15 9 13L11.5 4C12 2 13 1 14.5 1C16 1 17 2.5 17 5V12C17 15 15 17 12 17Z" fill="url(#cpb)" />
      </svg>
    </div>
  </div>
);

export default App;
